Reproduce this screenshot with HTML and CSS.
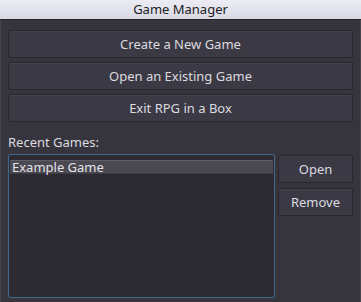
FILE: index.html
```html
<!DOCTYPE html>
<html>
<head>
<meta charset="utf-8">
<link rel="stylesheet" href="styles.css">
</head>
<body>
<div class="window">
  <div class="titlebar">Game Manager</div>
  <div class="content">
    <div class="actions">
      <button class="btn">Create a New Game</button>
      <button class="btn">Open an Existing Game</button>
      <button class="btn">Exit RPG in a Box</button>
    </div>
    <div class="label">Recent Games:</div>
    <div class="recent">
      <div class="list">
        <div class="item selected">Example Game</div>
      </div>
      <div class="side">
        <button class="btn">Open</button>
        <button class="btn">Remove</button>
      </div>
    </div>
  </div>
</div>
</body>
</html>
```
FILE: styles.css
```css
html, body {
  margin: 0;
  padding: 0;
  width: 361px;
  height: 302px;
  overflow: hidden;
  background: #36343d;
}
.window {
  height: 302px;
  box-sizing: border-box;
  border-left: 1px solid #46444d;
  border-right: 1px solid #46444d;
  display: flex;
  flex-direction: column;
  font-family: "Noto Sans", "Open Sans", sans-serif;
  font-size: 13px;
  color: #dcdbe0;
}
.titlebar {
  height: 19px;
  line-height: 19px;
  text-align: center;
  color: #1c1c22;
  background: linear-gradient(#ececf4, #d9d9e5);
  border-bottom: 1px solid #25242a;
  margin: 0 -1px;
}
.content {
  flex: 1;
  display: flex;
  flex-direction: column;
  padding: 10px 7px 4px 7px;
}
.actions {
  display: flex;
  flex-direction: column;
  gap: 4px;
}
.btn {
  height: 28px;
  box-sizing: border-box;
  background: #3b3943;
  border: 1px solid #28272e;
  border-radius: 2px;
  box-shadow: inset 0 1px 0 #43414b;
  color: #dcdbe0;
  font-family: "Noto Sans", "Open Sans", sans-serif;
  font-size: 13px;
  padding: 0;
  margin: 0;
}
.label {
  margin-top: 11px;
  height: 21px;
  line-height: 18px;
}
.recent {
  flex: 1;
  display: flex;
  gap: 3px;
}
.list {
  width: 267px;
  box-sizing: border-box;
  background: #2c2a33;
  border: 1px solid #41688a;
  border-radius: 2px;
  padding: 5px 1px 0 1px;
}
.item {
  height: 14px;
  line-height: 12px;
  padding-left: 2px;
  box-sizing: border-box;
}
.item.selected {
  background: #4a4851;
  border-top: 1px solid #5e5c65;
  border-bottom: 1px solid #3e3c45;
  color: #e4e3e8;
}
.side {
  width: 75px;
  padding-top: 1px;
  display: flex;
  flex-direction: column;
  gap: 5px;
}
```
